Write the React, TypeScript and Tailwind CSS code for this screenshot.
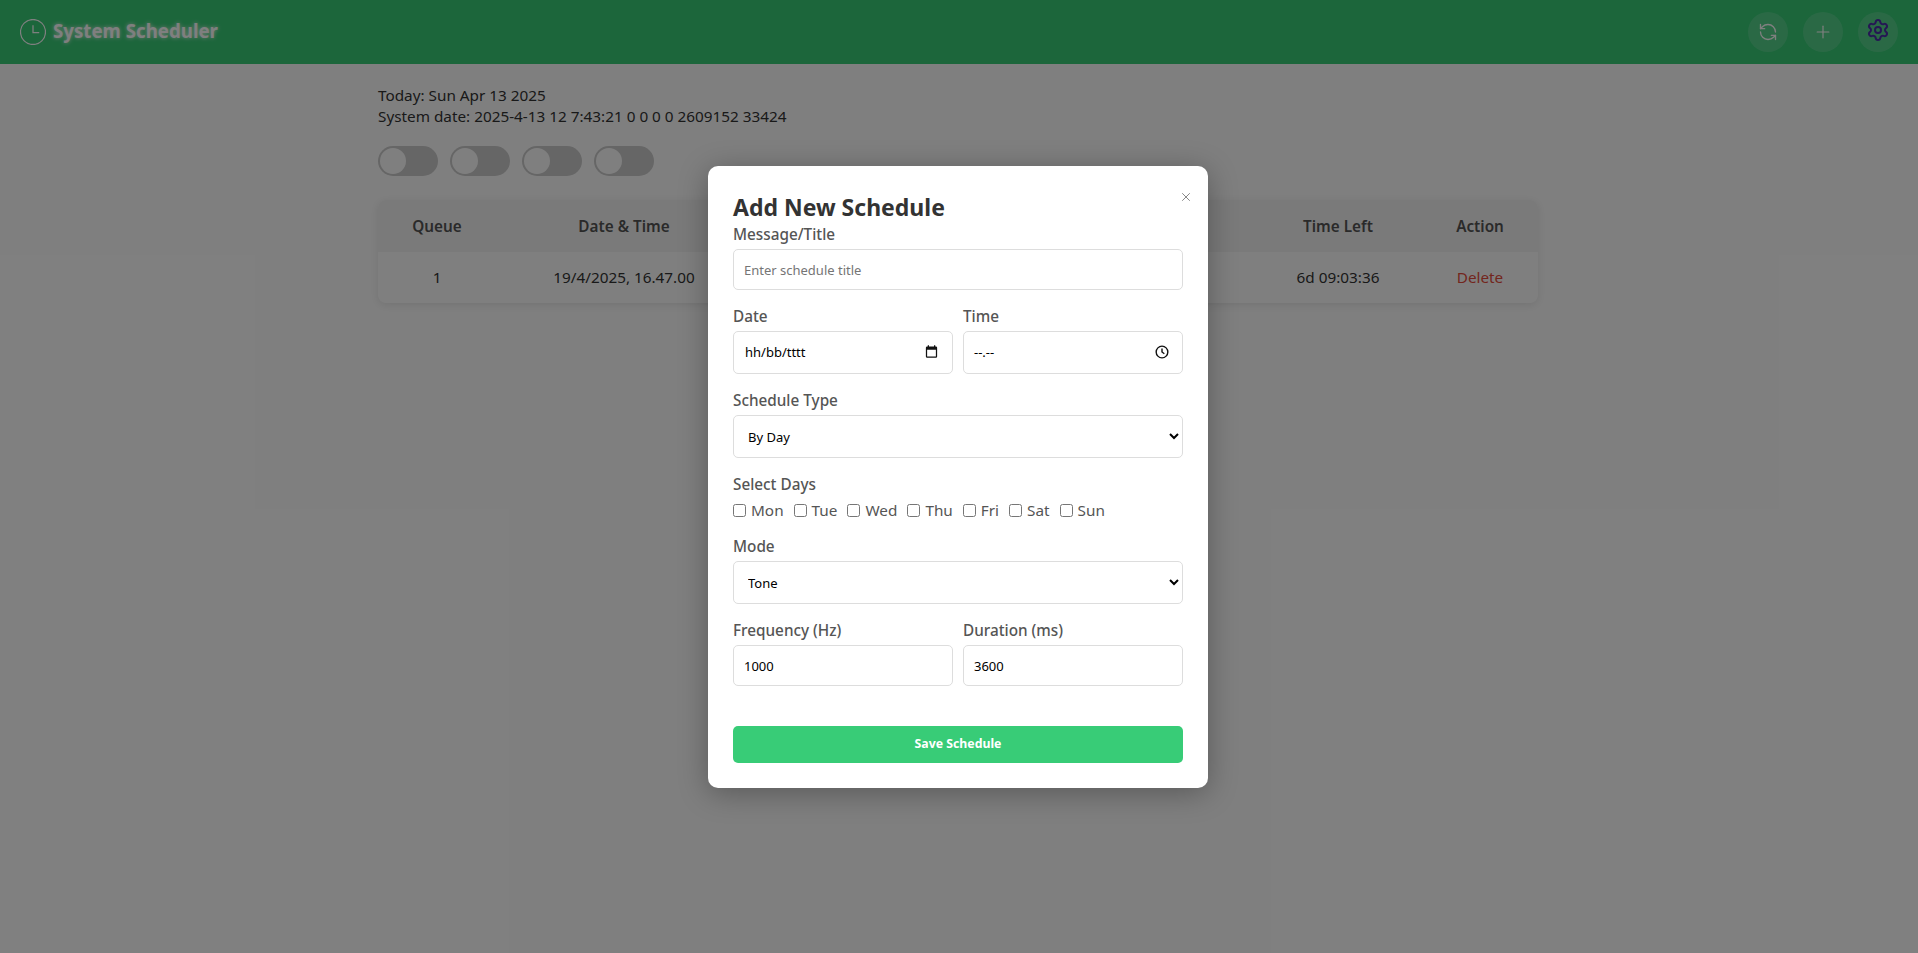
import { Plus, RefreshCcw, Settings, X } from "lucide-react";

const labelClass = "block mb-1 text-[15.3px] leading-[21px] font-medium text-[#555]";
const fieldClass =
  "w-full h-[41px] rounded-[5px] border border-[#ddd] bg-white px-[10px] text-[13px] text-black outline-none";
const days = ["Mon", "Tue", "Wed", "Thu", "Fri", "Sat", "Sun"];

const Toggle = () => (
  <div className="h-[30px] w-[60px] rounded-full bg-[#ccc] p-[2px]">
    <div className="size-[26px] rounded-full bg-white" />
  </div>
);

const HeaderButton = ({ children }: { children: React.ReactNode }) => (
  <button className="flex size-10 items-center justify-center rounded-full bg-white/15 text-white">
    {children}
  </button>
);

export default function App() {
  return (
    <div className="relative min-h-[953px] bg-white font-['Noto_Sans','Open_Sans',sans-serif] text-[#333]">
      <header className="flex h-16 items-center justify-between bg-[#38cc77] px-5">
        <div className="flex items-center gap-[7px]">
          <svg viewBox="0 0 25 25" className="size-[26px]" fill="none" stroke="white" strokeWidth="1.2">
            <circle cx="12.5" cy="12.5" r="12" />
            <path d="M12.5 6v7h6" />
          </svg>
          <h1 className="-translate-y-px text-[18.7px] font-bold text-white [text-shadow:0_0_4px_rgba(255,255,255,0.9)]">
            System Scheduler
          </h1>
        </div>
        <div className="flex items-center gap-[15px]">
          <HeaderButton>
            <RefreshCcw size={20} strokeWidth={1.6} />
          </HeaderButton>
          <HeaderButton>
            <Plus size={20} strokeWidth={1.4} />
          </HeaderButton>
          <HeaderButton>
            <Settings size={24} strokeWidth={2} className="-translate-y-0.5 text-[#4b2ea8]" />
          </HeaderButton>
        </div>
      </header>

      <main className="ml-[378px] w-[1160px] pt-[21px]">
        <div className="text-[15.3px] leading-[21px]">
          <div>Today: Sun Apr 13 2025</div>
          <div>System date: 2025-4-13 12 7:43:21 0 0 0 0 2609152 33424</div>
        </div>
        <div className="mt-[19px] flex gap-3">
          <Toggle />
          <Toggle />
          <Toggle />
          <Toggle />
        </div>
        <div className="mt-6 overflow-hidden rounded-lg bg-white shadow-[0_2px_10px_rgba(0,0,0,0.1)]">
          <div className="grid h-[52px] grid-cols-[118px_256px_1fr_168px_116px] items-center bg-[#f5f5f5] text-center text-[15.3px] font-semibold text-[#555]">
            <div>Queue</div>
            <div>Date &amp; Time</div>
            <div />
            <div>Time Left</div>
            <div>Action</div>
          </div>
          <div className="grid h-[51px] grid-cols-[118px_256px_1fr_168px_116px] items-center text-center text-[15.3px]">
            <div>1</div>
            <div>19/4/2025, 16.47.00</div>
            <div />
            <div>6d 09:03:36</div>
            <div className="text-[#e74c3c]">Delete</div>
          </div>
        </div>
      </main>

      <div className="absolute inset-0 flex items-start justify-center bg-black/50 pt-[166px] pr-[2px]">
        <div className="relative h-[622px] w-[500px] rounded-[10px] bg-white px-[25px] pt-[25px] shadow-[0_5px_30px_rgba(0,0,0,0.3)]">
          <button className="absolute top-[24px] right-[15px] text-[#777]">
            <X size={14} strokeWidth={1.5} />
          </button>
          <h2 className="text-[23px] leading-[33px] font-bold text-[#333]">Add New Schedule</h2>

          <label className={labelClass}>Message/Title</label>
          <input className={`${fieldClass} placeholder:text-[#757575]`} placeholder="Enter schedule title" />

          <div className="mt-4 grid grid-cols-2 gap-[10px]">
            <div>
              <label className={labelClass}>Date</label>
              <div className={`${fieldClass} flex h-[43px] items-center justify-between pr-[13px] pl-[11px] text-sm`}>
                <span>hh/bb/tttt</span>
                <svg viewBox="0 0 24 24" className="size-[15px] -translate-y-px" fill="#111">
                  <path d="M19 4h-1V2h-2v2H8V2H6v2H5a2 2 0 0 0-2 2v14a2 2 0 0 0 2 2h14a2 2 0 0 0 2-2V6a2 2 0 0 0-2-2zm0 16H5V9h14v11z" />
                </svg>
              </div>
            </div>
            <div>
              <label className={labelClass}>Time</label>
              <div className={`${fieldClass} flex h-[43px] items-center justify-between pr-[13px] text-sm`}>
                <span>--.--</span>
                <svg viewBox="0 0 24 24" className="size-[14px] -translate-y-px" fill="none" stroke="#111" strokeWidth="2.4">
                  <circle cx="12" cy="12" r="10" />
                  <path d="M12 6v6l4 3" />
                </svg>
              </div>
            </div>
          </div>

          <div className="mt-4">
            <label className={labelClass}>Schedule Type</label>
            <select className={`${fieldClass} h-[43px]`} defaultValue="By Day">
              <option>By Day</option>
            </select>
          </div>

          <div className="mt-4">
            <label className={`${labelClass} pb-px`}>Select Days</label>
            <div className="flex gap-[10px] text-[15.3px] leading-[21px] text-[#555]">
              {days.map((day) => (
                <label key={day} className="flex items-center gap-[5px]">
                  <input type="checkbox" className="m-0 size-[13px]" />
                  {day}
                </label>
              ))}
            </div>
          </div>

          <div className="mt-[15px]">
            <label className={labelClass}>Mode</label>
            <select className={`${fieldClass} h-[43px]`} defaultValue="Tone">
              <option>Tone</option>
            </select>
          </div>

          <div className="mt-4 grid grid-cols-2 gap-[10px]">
            <div>
              <label className={labelClass}>Frequency (Hz)</label>
              <input className={fieldClass} defaultValue="1000" />
            </div>
            <div>
              <label className={labelClass}>Duration (ms)</label>
              <input className={fieldClass} defaultValue="3600" />
            </div>
          </div>

          <button className="mt-10 h-[37px] w-full rounded-[5px] bg-[#38cc77] text-[12.3px] font-bold text-white">
            Save Schedule
          </button>
        </div>
      </div>
    </div>
  );
}
